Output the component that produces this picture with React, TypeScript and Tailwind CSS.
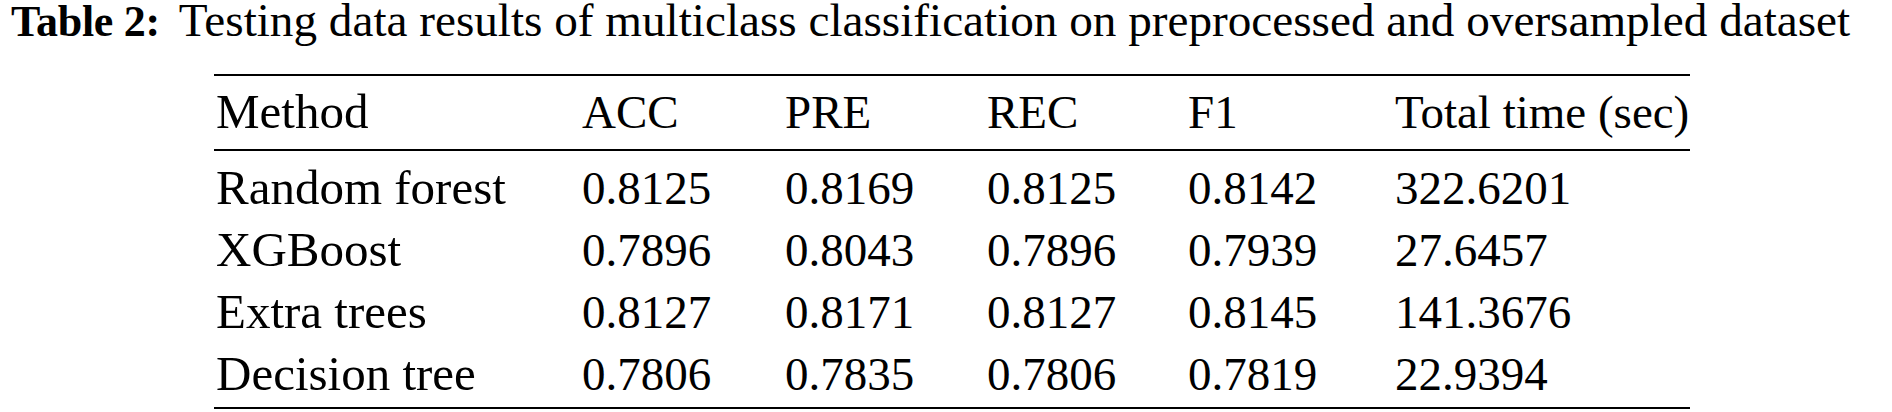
import React from "react";

const rows = [
  ["Random forest", "0.8125", "0.8169", "0.8125", "0.8142", "322.6201"],
  ["XGBoost", "0.7896", "0.8043", "0.7896", "0.7939", "27.6457"],
  ["Extra trees", "0.8127", "0.8171", "0.8127", "0.8145", "141.3676"],
  ["Decision tree", "0.7806", "0.7835", "0.7806", "0.7819", "22.9394"],
];

const header = ["Method", "ACC", "PRE", "REC", "F1", "Total time (sec)"];

const grid =
  "grid grid-cols-[366px_203px_202px_201px_207px_1fr] items-baseline pl-[2px] text-[47px]";

export default function App() {
  return (
    <div className="w-[1892px] h-[412px] bg-white text-black overflow-hidden font-['Liberation_Serif','Times_New_Roman',serif]">
      <div className="flex items-baseline pl-[11px] text-[47.2px] leading-[40px] whitespace-nowrap">
        <span className="font-bold text-[44px] tracking-[-0.3px]">Table 2:</span>
        <span className="ml-[19px]">
          Testing data results of multiclass classification on preprocessed and oversampled dataset
        </span>
      </div>
      <div className="ml-[214px] mt-[32px] w-[1476px] leading-[62px] whitespace-nowrap">
        <div className="border-t-2 border-b-2 border-black pt-[5px] pb-[6px]">
          <div className={grid}>
            {header.map((h, i) => (
              <div key={h} className={i === 0 ? "text-[49px]" : ""}>
                {h}
              </div>
            ))}
          </div>
        </div>
        <div className="border-b-2 border-black pt-[6px] pb-[2px]">
          {rows.map((r) => (
            <div key={r[0]} className={grid}>
              {r.map((c, i) => (
                <div key={i} className={i === 0 ? "text-[49px]" : ""}>
                  {c}
                </div>
              ))}
            </div>
          ))}
        </div>
      </div>
    </div>
  );
}
